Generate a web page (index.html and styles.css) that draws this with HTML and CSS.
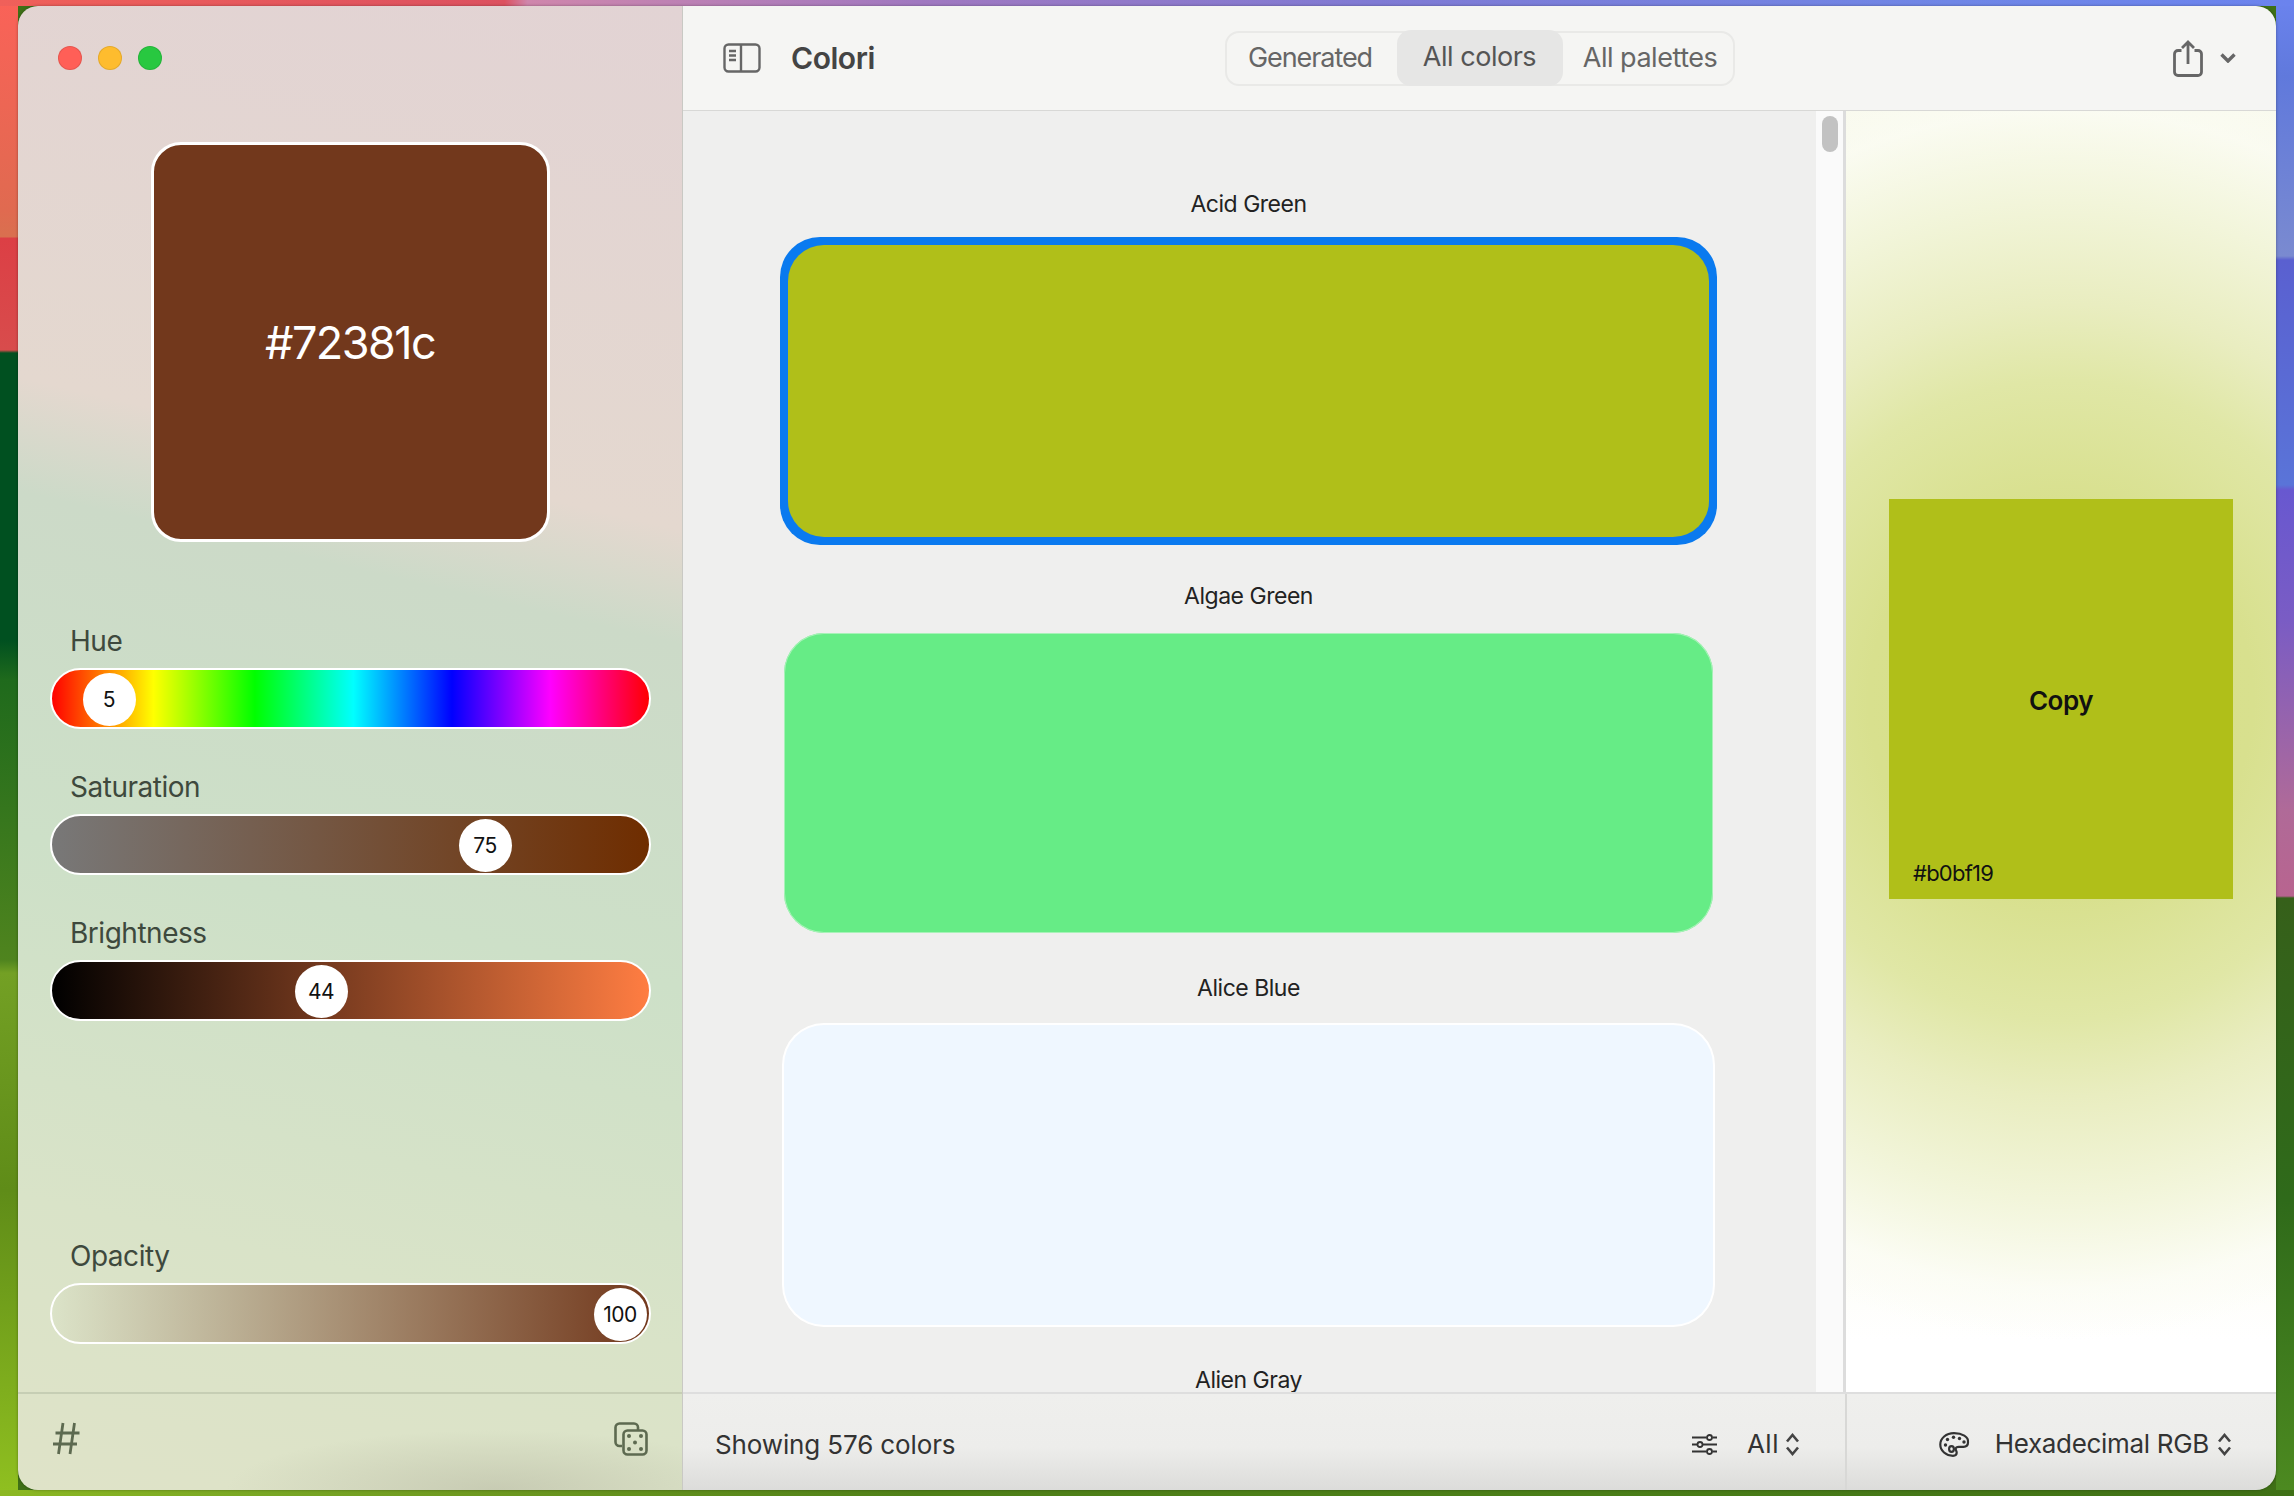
FILE: index.html
```html
<!DOCTYPE html>
<html lang="en">
<head>
<meta charset="utf-8">
<title>Colori</title>
<link rel="stylesheet" href="styles.css">
</head>
<body>
<div class="window">
  <aside class="sidebar">
    <div class="lights"><span class="light red"></span><span class="light yellow"></span><span class="light green"></span></div>
    <div class="current-swatch">#72381c</div>
    <div class="sliders">
      <div class="slider">
        <div class="slider-label">Hue</div>
        <div class="bar bar-hue"><span class="thumb" style="left:31px">5</span></div>
      </div>
      <div class="slider">
        <div class="slider-label">Saturation</div>
        <div class="bar bar-sat"><span class="thumb" style="left:407px">75</span></div>
      </div>
      <div class="slider">
        <div class="slider-label">Brightness</div>
        <div class="bar bar-bri"><span class="thumb" style="left:243px">44</span></div>
      </div>
    </div>
    <div class="slider slider-opacity">
      <div class="slider-label">Opacity</div>
      <div class="bar bar-opa"><span class="thumb" style="left:542px">100</span></div>
    </div>
    <div class="side-footer">
      <svg class="icon-hash" viewBox="0 0 28 33" width="28" height="33"><path d="M11 1 6.500 32M22.500 1 18 32M3.500 11h24M1 22h24"/></svg>
      <svg class="icon-dice" viewBox="0 0 34 34" width="34" height="34">
        <path class="dice-line" d="M8 24H5.500a4 4 0 0 1-4-4V5.500a4 4 0 0 1 4-4H20a4 4 0 0 1 4 4V8"/>
        <rect class="dice-line" x="9.500" y="8.500" width="23" height="24" rx="4"/>
        <circle cx="15" cy="14" r="2"/><circle cx="27" cy="14" r="2"/><circle cx="21" cy="20.500" r="2"/><circle cx="15" cy="27" r="2"/><circle cx="27" cy="27" r="2"/>
      </svg>
    </div>
  </aside>
  <div class="main">
    <header class="toolbar">
      <div class="tool-left">
        <svg class="icon-side" viewBox="0 0 38 30" width="38" height="30">
          <rect x="1.500" y="1.500" width="35" height="27" rx="4"/>
          <path d="M18 1.500v27M6 8h7M6 12.500h7M6 17h7"/>
        </svg>
        <span class="app-title">Colori</span>
      </div>
      <nav class="segments">
        <span class="seg seg-first">Generated</span>
        <span class="seg seg-on">All colors</span>
        <span class="seg seg-last">All palettes</span>
      </nav>
      <div class="tool-right">
        <svg class="icon-share" viewBox="0 0 30 37" width="30" height="37">
          <path d="M8.500 10.500H5a3.500 3.500 0 0 0-3.500 3.500v18A3.500 3.500 0 0 0 5 35.500h20a3.500 3.500 0 0 0 3.500-3.500V14a3.500 3.500 0 0 0-3.500-3.500h-3.500"/>
          <path d="M15 24V2M9 8l6-6 6 6"/>
        </svg>
        <svg class="icon-chev" viewBox="0 0 16 10" width="16" height="10"><path d="M1.500 1.500 8 8l6.500-6.500"/></svg>
      </div>
    </header>
    <div class="content">
      <section class="list">
        <div class="color-row"><div class="color-name">Acid Green</div><div class="color-card card-acid"></div></div>
        <div class="color-row"><div class="color-name">Algae Green</div><div class="color-card card-algae"></div></div>
        <div class="color-row"><div class="color-name">Alice Blue</div><div class="color-card card-alice"></div></div>
        <div class="color-row"><div class="color-name">Alien Gray</div></div>
      </section>
      <div class="scrollbar"><div class="scroll-thumb"></div></div>
      <section class="preview">
        <div class="tile">
          <span class="tile-copy">Copy</span>
          <span class="tile-hex">#b0bf19</span>
        </div>
      </section>
    </div>
    <footer class="status">
      <div class="status-left">
        <span class="status-count">Showing 576 colors</span>
        <div class="status-menu">
          <svg class="icon-tune" viewBox="0 0 25 21" width="25" height="21">
            <path d="M0 3.500h14.500M20.500 3.500H25M0 10.500h5M11 10.500h14M0 17.500h14.500M20.500 17.500H25"/>
            <circle cx="17.500" cy="3.500" r="2.500"/><circle cx="8" cy="10.500" r="2.500"/><circle cx="17.500" cy="17.500" r="2.500"/>
          </svg>
          <span class="menu-text menu-all">All</span>
          <svg class="icon-updown" viewBox="0 0 15 23" width="15" height="23"><path d="M2 8.500 7.500 2 13 8.500M2 14.500 7.500 21l5.500-6.500"/></svg>
        </div>
      </div>
      <div class="status-right">
        <svg class="icon-palette" viewBox="0 0 31 25" width="31" height="25">
          <path d="M15 1.200C7 1.200 1.300 6.200 1.300 12.500S7 23.800 14 23.800c2.500 0 3.700-1.200 3.700-3 0-1.800-1-2.300-1-3.700 0-1.400 1.200-2.300 3-2.300h4.800c3 0 4.500-1.600 4.500-4.200C30 4.500 22.800 1.200 15 1.200z"/>
          <ellipse cx="12.500" cy="17" rx="2.400" ry="2.900"/>
          <circle class="dot" cx="6.500" cy="13" r="1.700"/><circle class="dot" cx="8.500" cy="7.500" r="1.700"/><circle class="dot" cx="14.500" cy="5.200" r="1.700"/><circle class="dot" cx="20.500" cy="6.500" r="1.700"/><circle class="dot" cx="25" cy="10" r="1.700"/>
        </svg>
        <span class="menu-text">Hexadecimal RGB</span>
        <svg class="icon-updown icon-updown-wide" viewBox="0 0 15 23" width="15" height="23"><path d="M2 8.500 7.500 2 13 8.500M2 14.500 7.500 21l5.500-6.500"/></svg>
      </div>
    </footer>
  </div>
</div>
</body>
</html>
```
FILE: styles.css
```css
* { box-sizing: border-box; }
html, body { margin: 0; height: 100%; }
body {
  width: 2294px;
  height: 1496px;
  overflow: hidden;
  padding: 6px 18px;
  font-family: "Inter", "Liberation Sans", sans-serif;
  letter-spacing: -0.03em;
  background-color: #3f7016;
  background-image:
    linear-gradient(90deg, #f0605a 0, #dc5160 22%, #cf86ac 23%, #a078c0 40%, #7f7ad4 60%, #6f86e6 85%, #6b83ee 100%),
    linear-gradient(90deg, #8cb822 0, #78a624 12%, #6f9a20 20%, #4f8018 40%, #4a7e18 70%, #3f7016 100%),
    linear-gradient(180deg, #fa6258 0, #e06a50 210px, #d9704f 237px, #dc3f45 238px, #d84c4c 350px, #005020 353px, #005020 640px, #1f6a1c 680px, #4f841e 960px, #73a024 973px, #5f8c18 1190px, #90c020 1496px),
    linear-gradient(180deg, #6b83ee 0, #6079dc 76px, #7a8ad0 256px, #5a60d0 260px, #5a74d8 485px, #6858d0 490px, #7a5cc4 620px, #b06a98 811px, #b8648f 896px, #36601a 898px, #2f6a1a 1200px, #4d8a20 1496px);
  background-repeat: no-repeat;
  background-size: 100% 6px, 100% 6px, 18px 100%, 18px 100%;
  background-position: 0 0, 0 100%, 0 0, 100% 0;
}

.window {
  width: 2258px;
  height: 1484px;
  display: grid;
  grid-template-columns: 665px 1fr;
  border-radius: 20px;
  overflow: hidden;
  box-shadow: 0 0 3px rgba(0, 0, 0, .35);
}

/* sidebar */
.sidebar {
  display: flex;
  flex-direction: column;
  border-right: 1px solid #c9c9c4;
  background:
    radial-gradient(ellipse 270px 60px at 72% 100%, rgba(165, 165, 145, .38), rgba(165, 165, 145, 0)),
    linear-gradient(193deg, #e2d3d4 0, #e4d8cf 32%, #ccdac8 39%, #cde0c8 60%, #d9e3c8 82%, #dfe3c8 100%);
}
.lights { display: flex; gap: 16px; padding: 40px 0 0 40px; }
.light { width: 24px; height: 24px; border-radius: 50%; box-shadow: inset 0 0 0 1px rgba(0, 0, 0, .1); }
.red { background: #ff5f57; }
.yellow { background: #febc2e; }
.green { background: #28c840; }

.current-swatch {
  width: 399px;
  height: 400px;
  margin: 72px auto 0;
  display: flex;
  align-items: center;
  justify-content: center;
  background: #72381c;
  border: 3px solid #fff;
  border-radius: 30px;
  color: #fff;
  font-size: 45px;
  letter-spacing: -0.035em;
}

.sliders { display: flex; flex-direction: column; gap: 41px; margin-top: 82px; }
.slider { padding: 0 31.5px; }
.slider-label { padding-left: 20.5px; font-size: 28px; line-height: 34px; color: #3e493d; }
.bar {
  position: relative;
  height: 61px;
  margin-top: 10px;
  border: 2px solid #fff;
  border-radius: 31px;
}
.bar-hue { background: linear-gradient(90deg, #f00 0, #ff0 17%, #0f0 34%, #0ff 50.500%, #00f 67%, #f0f 83.500%, #f00 100%); }
.bar-sat { background: linear-gradient(90deg, #787878, #6f2d00); }
.bar-bri { background: linear-gradient(90deg, #000, #ff7d42); }
.bar-opa { background: linear-gradient(90deg, rgba(114, 56, 28, 0), #72381c); }
.thumb {
  position: absolute;
  top: 3px;
  width: 53px;
  height: 53px;
  display: flex;
  align-items: center;
  justify-content: center;
  border-radius: 50%;
  background: #fff;
  color: #111;
  font-size: 21px;
}
.slider-opacity { margin-top: auto; padding-bottom: 48px; }

.side-footer {
  height: 98px;
  display: flex;
  justify-content: space-between;
  align-items: flex-start;
  padding: 28px 34px 0 34px;
  border-top: 2px solid #c6ceb4;
}
.icon-hash path { fill: none; stroke: #5d6a50; stroke-width: 2.800; }
.dice-line { fill: none; stroke: #5d6a50; stroke-width: 2.600; }
.icon-dice circle { fill: #5d6a50; }

/* main column */
.main { display: grid; grid-template-rows: 105px 1281px 98px; min-width: 0; }
.toolbar {
  display: grid;
  grid-template-columns: 1fr auto 1fr;
  align-items: center;
  padding: 0 40px;
  background: #f5f5f3;
  border-bottom: 1px solid #d8d8d6;
}
.tool-left { display: flex; align-items: center; gap: 30px; }
.icon-side rect, .icon-side path { fill: none; stroke: #666; stroke-width: 2.400; }
.app-title { font-size: 30px; font-weight: 600; color: #444; letter-spacing: -0.015em; }
.segments {
  display: grid;
  grid-template-columns: 170px 166px 170px;
  height: 55px;
  border: 2px solid #e9e9e7;
  border-radius: 14px;
}
.seg { display: flex; align-items: center; justify-content: center; padding-bottom: 2px; font-size: 27px; color: #666; }
.seg-first { padding-right: 3px; letter-spacing: -0.04em; }
.seg-last { padding-left: 5px; }
.seg-on { margin: -3px 0 -2px; border-radius: 14px; background: #e6e6e5; color: #555; }
.tool-right { display: flex; align-items: center; justify-content: flex-end; gap: 17px; }
.icon-share path { fill: none; stroke: #666; stroke-width: 2.800; }
.icon-chev path { fill: none; stroke: #666; stroke-width: 3.400; }

.content { display: grid; grid-template-columns: 1133px 27px 1fr; min-height: 0; }
.list { overflow: hidden; padding: 81px 103px 0 101px; background: #efefee; }
.color-row { margin-bottom: 43px; }
.color-name { height: 24px; margin-bottom: 25px; font-size: 23px; line-height: 24px; text-align: center; color: #222; }
.color-card { height: 300px; border-radius: 40px; }
.card-acid {
  height: 308px;
  margin: -4px;
  padding: 8px;
  background: #0a7aef;
}
.card-acid::before {
  content: "";
  display: block;
  height: 100%;
  border-radius: 36px;
  background: #b0bf19;
}
.card-algae { background: #66ec86; box-shadow: inset 0 0 0 1px #a8f2b8; }
.card-alice { background: #eff7ff; box-shadow: 0 0 0 2px #fff; }

.scrollbar { padding: 5px 5px 0 6px; background: #fafafa; }
.scroll-thumb { height: 36px; border-radius: 8px; background: #c2c2c2; }

.preview {
  position: relative;
  padding: 388px 43px 0;
  border-left: 3px solid #dcdcdc;
  background:
    radial-gradient(ellipse 620px 640px at 50% 46%, #d6df88 0, #d8e08e 31%, #e0e7a6 50%, #e9edc0 62%, #f2f5da 78%, rgba(251, 252, 243, .7) 92%, rgba(255, 255, 255, 0) 100%),
    linear-gradient(180deg, #f9faee 0, #f6f8e0 30%, #f6f8e0 70%, #fff 96%);
}
.tile {
  position: relative;
  height: 400px;
  display: flex;
  align-items: center;
  justify-content: center;
  padding-top: 2px;
  background: #b0bf19;
  color: #111;
}
.tile-copy { font-size: 26px; font-weight: 600; }
.tile-hex { position: absolute; left: 24px; bottom: 13px; font-size: 22px; line-height: 26px; letter-spacing: -0.035em; }

.status {
  display: grid;
  grid-template-columns: 1162px 1fr;
  border-top: 2px solid #dedede;
  background: linear-gradient(180deg, #efefed 0, #ededeb 55%, #dcdcda 100%);
  font-size: 26px;
  letter-spacing: -0.012em;
  color: #333;
}
.status-left { display: flex; align-items: center; justify-content: space-between; padding: 4px 45px 0 32px; }
.status-right { display: flex; align-items: center; justify-content: flex-end; padding: 4px 44px 0 0; border-left: 2px solid #d8d8d6; }
.status-count { letter-spacing: -0.005em; }
.status-menu { display: flex; align-items: center; }
.menu-text { line-height: 32px; }
.menu-all { margin-left: 30px; letter-spacing: 0.02em; }
.icon-tune path { fill: none; stroke: #333; stroke-width: 2; }
.icon-tune circle { fill: none; stroke: #333; stroke-width: 1.800; }
.icon-updown { margin-left: 6px; }
.icon-updown-wide { margin-left: 8px; }
.icon-updown path { fill: none; stroke: #444; stroke-width: 2.600; }
.icon-palette { margin-right: 25px; }
.icon-palette path, .icon-palette ellipse { fill: none; stroke: #333; stroke-width: 2.200; }
.dot { fill: #333; }
```
